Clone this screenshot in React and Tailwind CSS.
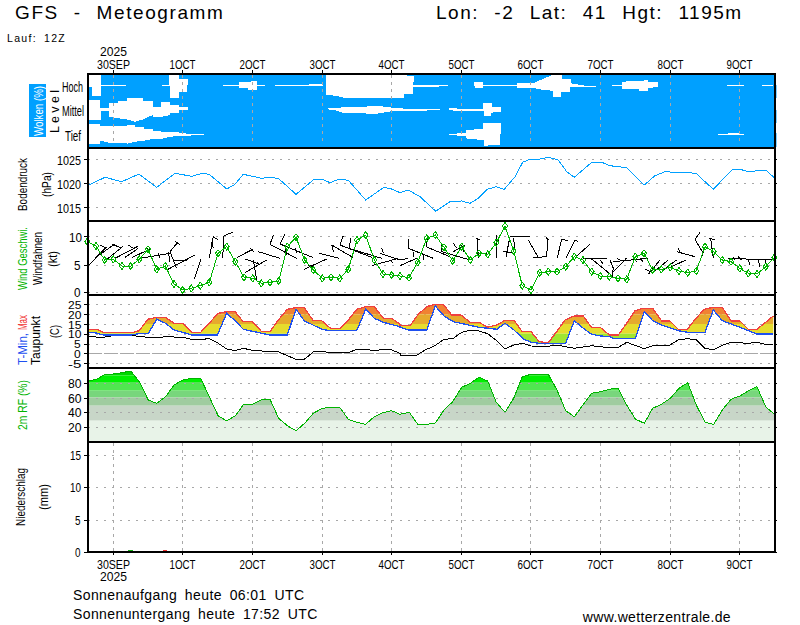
import React from "react";

const z = (ox, oy, a) => {
  const out = [];
  for (let i = 0; i < a.length; i += 2) out.push([ox + a[i] / 3, oy + a[i + 1] / 3]);
  return out;
};
const P = (pts) => pts.map((p) => p[0].toFixed(1) + "," + p[1].toFixed(1)).join(" ");
const DAYS = [
  ["30SEP", 113.5], ["1OCT", 182.5], ["2OCT", 252.5], ["3OCT", 322.5], ["4OCT", 391.5],
  ["5OCT", 461.5], ["6OCT", 530.5], ["7OCT", 600.5], ["8OCT", 670.5], ["9OCT", 739.5],
];
const L = 87.5, R = 775;
const FONT = "'Liberation Sans', Arial, sans-serif";

/* ---------- data, read from the reference ---------- */
const pressure = [
  ...z(0, 145, [260,123,315,97,365,110,417,87,470,127,525,85,575,94,607,85,628,88,680,132,705,118,730,88,785,100,805,97,835,100,888,148,940,105,965,102,990,113,1018,102,1045,106,1097,165,1150,128,1170,130,1200,143]),
  ...z(400, 145, [25,135,60,155,107,199,150,170,185,168,210,175,235,160,262,133,288,125,313,133,345,95,368,52,390,43,415,43,445,37,475,45,500,80,523,97,575,52,605,52,630,62,680,68,733,120,765,92,795,80,825,82,865,82,890,87,940,133,995,75,1020,73,1045,80,1097,75,1125,100]),
];
const gust = [
  ...z(0, 145, [262,290,288,303,314,345,340,343,366,363,392,363,418,343,444,313,470,373,496,363,522,417,548,435,574,430,601,422,628,412,654,325,680,305,706,350,732,397,758,400,784,415,810,412,836,408,862,305,888,277,914,345,940,375,967,400,993,397,1019,400,1045,373,1071,285,1097,270,1123,345,1149,387,1175,390]),
  ...z(400, 145, [0,393,27,398,53,352,80,280,106,270,132,307,158,348,185,305,211,345,237,325,263,328,289,293,315,243,341,318,367,422,393,435,419,383,445,380,471,380,497,365,523,335,549,345,575,380,601,393,628,395,654,400,680,403,706,335,732,325,758,375,784,373,811,367,837,378,863,383,889,378,915,305,941,320,967,345,993,350,1019,370,1045,385,1071,387,1097,365,1123,338]),
];
const barbsL = [
  [262,365,320,305],[290,335,345,297],[335,297,362,308],[300,300,315,308],[318,345,368,305],[345,340,415,303],[385,300,400,310],[375,337,415,310],
  [395,338,450,312],[420,340,510,325],[440,310,450,320],[475,325,480,340],[505,322,510,350],[500,375,585,330],[510,320,535,290],[510,320,530,370],[525,290,540,298],[520,345,560,345],
  [583,402,603,342],[628,338,640,275],[640,275,655,285],[633,290,640,310],[668,338,672,272],[672,272,698,262],[710,338,760,312],[750,310,762,320],
  [735,342,780,358],[735,383,800,345],[760,345,770,405],[770,350,780,360],[775,320,840,340],[810,298,820,270],[810,298,890,340],[840,297,855,268],[840,297,940,338],[855,310,860,330],[885,310,890,325],
  [912,373,980,342],[925,360,940,365],[957,325,1017,340],[995,300,1000,320],[995,300,1060,338],[1020,300,1030,272],[1020,300,1115,337],[1047,310,1053,278],[1047,310,1145,340],
  [1115,362,1195,340],[1140,325,1200,345],[1145,310,1150,325],[1170,345,1180,355],
];
const barbsR = [
  [0,362,50,340],[0,345,25,340],[25,283,25,310],[25,310,100,340],[40,320,40,335],[70,330,70,345],[78,305,150,335],[78,305,85,275],[125,295,125,320],[125,320,210,345],[160,295,170,310],[160,320,195,300],[185,300,190,320],
  [228,280,240,285],[232,280,235,338],[232,325,260,325],[290,270,290,338],[285,300,295,285],[318,335,330,275],[330,275,390,275],[310,320,345,325],[340,280,345,310],[385,285,415,338],[400,338,440,335],[437,275,445,285],[443,285,440,335],
  [472,338,485,283],[485,283,505,287],[498,338,525,285],[525,285,535,290],[528,335,570,298],[550,340,620,340],[575,342,640,395],[600,345,610,358],[630,345,640,370],[640,370,635,398],[640,380,680,340],[640,350,745,340],[650,340,660,345],[675,338,680,348],[700,335,710,350],[720,340,730,350],
  [735,372,760,385],[745,388,780,345],[765,378,805,345],[790,375,830,345],[808,368,858,345],[805,365,820,370],[830,320,885,335],[835,310,840,325],[885,283,900,263],[885,283,910,325],[905,335,915,305],[928,280,945,285],[932,280,940,340],
  [985,340,1115,345],[1000,337,1005,345],[1015,335,1025,345],[1045,345,1050,360],[1075,345,1080,365],[1095,345,1100,360],
];
const tmax = [
  ...z(0, 290, [262,120,292,118,310,127,400,127,418,122,443,88,465,83,497,83,522,100,548,100,575,127,602,127,627,100,655,70,680,65,705,65,730,95,757,95,785,125,810,125,835,90,862,58,888,53,913,53,940,92,965,92,993,116,1020,116,1045,90,1070,58,1097,50,1123,50,1150,85,1175,85,1200,103]),
  ...z(400, 290, [0,107,30,107,55,73,80,50,105,43,130,43,155,75,183,75,210,97,237,97,263,112,290,105,315,91,342,91,367,125,393,125,418,155,445,158,470,125,495,90,523,78,550,78,575,113,602,113,628,135,655,135,680,100,705,62,730,55,758,55,785,93,810,93,835,118,862,118,888,85,913,58,940,52,967,52,993,93,1020,93,1045,118,1071,118,1120,78]),
];
const tmin = [
  ...z(0, 290, [262,128,285,128,310,135,392,135,418,131,445,130,470,88,497,100,522,120,548,127,575,135,652,135,680,70,705,92,730,118,785,130,810,135,862,135,888,58,913,92,965,118,993,122,1070,122,1097,58,1123,85,1150,97,1200,110]),
  ...z(400, 290, [0,112,25,120,80,120,106,48,132,78,160,95,237,112,290,118,315,100,342,120,370,147,395,157,418,160,497,160,523,92,550,115,575,133,602,138,628,140,640,145,706,145,733,65,758,92,785,105,835,122,862,127,915,127,940,60,967,92,1020,112,1045,122,1071,132,1120,132]),
];
const dew = [
  ...z(0, 290, [262,140,310,142,340,137,392,134,418,140,470,143,497,140,548,142,575,148,602,150,627,145,655,160,680,177,705,182,730,175,757,181,785,183,835,185,862,197,888,208,913,208,940,186,965,184,993,188,1045,188,1070,178,1097,178,1123,182,1150,178,1175,180,1200,190]),
  ...z(400, 290, [0,196,50,196,75,180,105,167,130,149,160,145,185,127,210,121,237,123,263,131,290,152,315,176,342,165,367,160,393,168,445,169,470,165,523,175,575,167,628,173,655,172,680,157,733,176,758,167,810,165,835,150,862,146,888,149,915,175,940,179,970,165,993,157,1045,160,1071,157,1095,163,1120,163]),
];
const rh = [
  ...z(0, 290, [262,273,290,268,315,253,340,252,366,248,392,243,418,275,445,330,470,340,497,320,522,285,548,270,574,265,602,265,628,320,654,377,680,393,706,377,732,342,758,342,784,330,810,328,836,385,862,407,888,422,914,400,940,370,967,355,993,352,1019,352,1045,388,1071,397,1097,403,1123,380,1149,368,1175,362,1200,373]),
  ...z(400, 290, [28,367,53,403,80,403,106,399,132,360,158,335,185,292,211,280,237,262,263,273,289,337,315,367,341,325,367,260,393,253,445,253,471,300,497,362,523,380,575,310,601,305,628,298,654,294,680,345,706,387,733,400,758,355,784,343,811,325,837,295,863,278,889,345,915,397,941,403,967,360,993,328,1019,318,1045,303,1071,290,1097,350,1123,373]),
];
const clouds = [
  z(0, 0, [265,225,302,225,302,288,275,288,275,262,265,262]),
  z(0, 0, [302,254,350,254,378,256,378,258,340,258,302,257]),
  z(0, 0, [265,360,265,299,300,299,300,325,328,325,328,310,355,310,355,303,380,303,380,295,430,295,430,302,458,302,458,322,483,322,483,307,510,307,510,315,537,315,537,322,565,322,565,330,537,330,537,338,510,338,510,345,485,350,458,350,458,345,430,358,405,365,380,358,355,355,328,350,328,333,302,333,302,360]),
  z(0, 0, [265,372,300,372,300,378,380,378,380,375,405,375,405,382,433,382,433,387,458,387,458,393,483,393,483,395,510,395,510,397,537,397,537,400,612,402,612,405,560,407,510,410,483,417,458,417,433,422,405,425,380,432,380,428,328,428,300,422,300,432,265,432]),
  z(0, 0, [507,225,537,225,537,238,565,238,565,255,562,255,562,275,537,275,537,293,510,293,510,258,487,258,487,255,507,255]),
  z(0, 0, [670,255,718,255,718,245,745,245,772,243,772,255,795,255,795,258,772,258,772,270,745,270,745,265,718,265,718,258,670,258]),
  z(0, 0, [825,255,928,255,928,252,968,252,968,258,825,258]),
  z(0, 0, [978,225,1200,225,1200,293,1032,293,1005,287,978,285]),
  z(400, 0, [0,225,42,228,40,255,92,255,143,255,143,258,92,261,65,262,40,262,40,282,12,282,12,293,0,293]),
  [...z(0, 0, [978,326,1030,322,1085,322,1110,318,1140,318,1165,322,1200,325]), ...z(400, 0, [40,328,120,328,120,330,40,333,0,332]), ...z(0, 0, [1165,335,1140,340,1113,343,1085,338,1058,338,1032,340,1005,330,978,328])],
  z(400, 0, [145,323,195,328,250,328,250,310,275,310,275,322,303,322,303,335,273,338,273,348,252,348,252,332,195,332,170,333,147,330]),
  z(400, 0, [148,402,172,402,172,399,197,399,197,390,222,390,222,386,250,386,250,370,303,370,303,403,300,403,300,435,252,437,252,420,222,418,197,415,197,408,170,407,170,404,148,404]),
  z(400, 0, [222,246,250,246,250,255,352,255,352,248,405,248,432,235,458,225,485,225,485,238,512,238,512,250,560,258,665,256,665,245,718,243,745,240,745,245,773,245,773,260,745,265,745,272,718,272,718,267,667,267,667,258,560,260,510,262,510,275,483,275,483,290,458,290,458,272,432,270,405,265,352,265,352,258,250,258,250,263,225,263,222,255]),
  z(400, 0, [981,255,1032,255,1032,258,981,258]),
  z(400, 0, [1086,255,1120,255,1120,258,1086,258]),
  z(400, 0, [955,402,975,401,1010,399,1032,402,1032,404,955,404]),
];

/* ---------- svg primitives ---------- */
const T = ({ x, y, w, size = 11, fill = "#000", anchor = "start", children }) => (
  <text x={x} y={y} fontSize={size} fill={fill} fontFamily={FONT} textAnchor={anchor} textLength={w} lengthAdjust="spacingAndGlyphs">
    {children}
  </text>
);
/* vertical label: reads bottom to top, from y1 up to y2, baseline on x */
const V = ({ x, y1, y2, size = 13, fill = "#000", children }) => (
  <text transform={`translate(${x} ${y1}) rotate(-90)`} fontSize={size} fill={fill} fontFamily={FONT} textLength={y1 - y2} lengthAdjust="spacingAndGlyphs">
    {children}
  </text>
);
const HGrid = ({ ys, dash = "2 6" }) =>
  ys.map((y) => (
    <line key={y} x1={L} x2={R} y1={y} y2={y} stroke="#a8a8a8" strokeDasharray={dash} shapeRendering="crispEdges" />
  ));
const VGrid = ({ y1, y2 }) =>
  DAYS.map(([, x]) => (
    <line key={x} x1={x} x2={x} y1={y1} y2={y2} stroke="#a8a8a8" strokeDasharray="3 4" shapeRendering="crispEdges" />
  ));
const Ticks = ({ ys }) =>
  ys.map((y) => (
    <g key={y} stroke="#000" shapeRendering="crispEdges">
      <line x1={84} x2={87} y1={y} y2={y} />
      <line x1={775} x2={777} y1={y} y2={y} />
    </g>
  ));
const Frame = ({ y1, y2 }) => (
  <rect x={L} y={y1} width={R - L} height={y2 - y1} fill="none" stroke="#000" strokeWidth="2" shapeRendering="crispEdges" />
);
const Line = ({ pts, stroke, w = 1 }) => (
  <polyline points={P(pts)} fill="none" stroke={stroke} strokeWidth={w} strokeLinejoin="miter" shapeRendering="crispEdges" />
);
const Panel = ({ y, h, children }) => (
  <svg className="block w-[800px] shrink-0 overflow-visible" style={{ height: h }} viewBox={`0 ${y} 800 ${h}`}>
    {children}
  </svg>
);

const TEMP_BANDS = [
  [304, 314.3, "#f08232"], [314.3, 324, "#e6aa2d"], [324, 333.7, "#e6dc2d"], [333.7, 346, "#a0e632"],
];
const RH_BANDS = [
  [370, 375.5, "#00d800"], [375.5, 382, "#00f000"], [382, 390.7, "#50e650"], [390.7, 397.3, "#78d67c"],
  [397.3, 405.7, "#a0cca0"], [405.7, 420.7, "#c8d6c8"], [420.7, 442, "#e8f3e8"],
];

function DateLabels({ y, yearY }) {
  return (
    <>
      {DAYS.map(([d, x]) => (
        <T key={d} x={x} y={y} size={13} anchor="middle" w={d === "30SEP" ? 33 : 26}>{d}</T>
      ))}
      <T x={113.5} y={yearY} size={13} anchor="middle" w={27}>2025</T>
    </>
  );
}

export default function App() {
  const band = [...tmax, ...[...tmin].reverse()];
  return (
    <div className="relative flex h-[625px] w-[800px] flex-col overflow-hidden bg-white text-black" style={{ fontFamily: FONT }}>
      <header className="flex h-[32px] shrink-0 items-start pt-[1px] text-[19px] leading-[24px]">
        <h1 className="ml-[15px] w-[421px] whitespace-pre font-normal tracking-[1.6px] [word-spacing:8px]">GFS - Meteogramm</h1>
        <p className="whitespace-pre tracking-[1.5px] [word-spacing:8.6px]">Lon: -2 Lat: 41 Hgt: 1195m</p>
      </header>
      <p className="ml-[7px] h-[12px] shrink-0 text-[10.5px] leading-[12px] tracking-[1.3px] [word-spacing:3px]">Lauf: 12Z</p>

      {/* top axis */}
      <Panel y={44} h={29}>
        <DateLabels y={68.5} yearY={56} />
        {DAYS.map(([, x]) => <line key={x} x1={x} x2={x} y1={70} y2={73} stroke="#000" shapeRendering="crispEdges" />)}
      </Panel>

      {/* clouds */}
      <Panel y={73} h={75}>
        <rect x={L} y={74} width={R - L} height={74} fill="#00a0ff" />
        {[[85, 98], [110, 123], [133, 147]].map(([a, b]) => <rect key={a} x={775} y={a} width={1.5} height={b - a} fill="#00a0ff" />)}
        {clouds.map((c, i) => <polygon key={i} points={P(c)} fill="#fff" shapeRendering="crispEdges" />)}
        <VGrid y1={75} y2={143} />
        <Frame y1={74} y2={148} />
        <rect x={29} y={84} width={17} height={53} fill="#00a0ff" />
        <V x={42.5} y1={136} y2={86} fill="#fff">Wolken (%)</V>
        <V x={59} y1={133} y2={90}>L e v e l</V>
        <T x={62} y={91.5} size={14} w={21}>Hoch</T>
        <T x={62} y={115.5} size={14} w={22}>Mittel</T>
        <T x={65} y={140.5} size={14} w={16}>Tief</T>
      </Panel>

      {/* pressure */}
      <Panel y={148} h={73}>
        <HGrid ys={[159.5, 183.5, 207.5]} />
        <Ticks ys={[159.5, 183.5, 207.5]} />
        <Line pts={pressure} stroke="#00a0ff" />
        <Frame y1={148} y2={221} />
        <V x={27} y1={211} y2={158}>Bodendruck</V>
        <V x={51} y1={197} y2={172}>(hPa)</V>
        {[["1025", 164.5], ["1020", 188.5], ["1015", 212.5]].map(([t, y]) => <T key={t} x={57} y={y} size={13.5} w={24}>{t}</T>)}
      </Panel>

      {/* wind */}
      <Panel y={221} h={74}>
        <HGrid ys={[236.5, 265, 292]} />
        <Ticks ys={[236.5, 265, 292]} />
        {[...barbsL.map((b) => [0, b]), ...barbsR.map((b) => [400, b])].map(([ox, b], i) => (
          <line key={i} x1={ox + b[0] / 3} y1={145 + b[1] / 3} x2={ox + b[2] / 3} y2={145 + b[3] / 3} stroke="#000" shapeRendering="crispEdges" />
        ))}
        <Line pts={gust} stroke="#00b400" />
        {gust.map((p, i) => (
          <polygon key={i} points={P([[p[0], p[1] - 3.5], [p[0] + 2.5, p[1]], [p[0], p[1] + 3.5], [p[0] - 2.5, p[1]]])} fill="none" stroke="#00b400" shapeRendering="crispEdges" />
        ))}
        <Frame y1={221} y2={295} />
        <V x={26.5} y1={290} y2={227} fill="#00b400">Wind Geschwi.</V>
        <V x={41.5} y1={285} y2={232}>Windfahnen</V>
        <V x={57} y1={267} y2={251}>(kt)</V>
        {[["10", 241.5, 69], ["5", 270, 74], ["0", 296.5, 74]].map(([t, y, x]) => <T key={t} x={x} y={y} size={13.5} w={t.length * 6.5}>{t}</T>)}
      </Panel>

      {/* temperature */}
      <Panel y={295} h={73}>
        <clipPath id="tb"><polygon points={P(band)} /></clipPath>
        <HGrid ys={[304.5, 314.5, 324.5, 334, 344, 363.5]} />
        <line x1={L} x2={R} y1={353.5} y2={353.5} stroke="#a8a8a8" strokeDasharray="14 2" shapeRendering="crispEdges" />
        <g clipPath="url(#tb)">
          {TEMP_BANDS.map(([a, b, c]) => <rect key={a} x={L} y={a} width={R - L} height={b - a} fill={c} />)}
        </g>
        <Line pts={dew} stroke="#000" />
        <Line pts={tmin} stroke="#1e50f0" w={1.3} />
        <Line pts={tmax} stroke="#f04040" w={1.3} />
        <Ticks ys={[304.5, 314.5, 324.5, 334, 344, 353.5, 363.5]} />
        <Frame y1={295} y2={368} />
        <V x={26.5} y1={365} y2={333} fill="#1e50f0">T-Min,</V>
        <V x={26.5} y1={330} y2={315} fill="#f03030">Max</V>
        <V x={40} y1={365} y2={316}>Taupunkt</V>
        <V x={59} y1={338} y2={325}>(C)</V>
        {[["25", 308.5, 68], ["20", 318.5, 68], ["15", 328.5, 68], ["10", 338, 68], ["5", 348, 74], ["0", 357.5, 74], ["-5", 367.5, 68]].map(([t, y, x]) => (
          <T key={t} x={x} y={y} size={11.5} w={t.length * 6.7}>{t}</T>
        ))}
      </Panel>

      {/* humidity */}
      <Panel y={368} h={74}>
        <clipPath id="rb"><polygon points={P([[L, 442], ...rh, [R, 442]])} /></clipPath>
        <g clipPath="url(#rb)">
          {RH_BANDS.map(([a, b, c]) => <rect key={a} x={L} y={a} width={R - L} height={b - a} fill={c} />)}
        </g>
        <HGrid ys={[383.5, 398.5, 412.5, 427.5]} />
        <Ticks ys={[383.5, 398.5, 412.5, 427.5]} />
        <Line pts={rh} stroke="#00b400" />
        <Frame y1={368} y2={442} />
        <V x={27} y1={430} y2={380} fill="#00b400">2m RF (%)</V>
        {[["80", 388], ["60", 403], ["40", 417], ["20", 432]].map(([t, y]) => <T key={t} x={68} y={y} size={13.5} w={13.5}>{t}</T>)}
      </Panel>

      {/* precipitation */}
      <Panel y={442} h={143}>
        <HGrid ys={[455.5, 487.5, 520]} />
        <VGrid y1={443} y2={552} />
        <Ticks ys={[455.5, 487.5, 520, 552]} />
        <rect x={128} y={550} width={5} height={2} fill="#18b018" />
        <rect x={163} y={550} width={4} height={2} fill="#f03030" />
        <rect x={156} y={551} width={2} height={1} fill="#f03030" />
        <rect x={495} y={551} width={3} height={1} fill="#f06060" />
        <Frame y1={442} y2={552} />
        {DAYS.map(([, x]) => <line key={x} x1={x} x2={x} y1={552} y2={555} stroke="#000" shapeRendering="crispEdges" />)}
        <V x={25} y1={526} y2={468}>Niederschlag</V>
        <V x={48} y1={510} y2={484}>(mm)</V>
        {[["15", 460, 70], ["10", 492, 70], ["5", 524.5, 75], ["0", 556.5, 75]].map(([t, y, x]) => <T key={t} x={x} y={y} size={13} w={t.length * 5.5}>{t}</T>)}
        <DateLabels y={568.5} yearY={580.5} />
      </Panel>

      {/* footer */}
      <footer className="flex flex-1 items-start justify-between pl-[73px] pr-[69px] pt-[1px] text-[14px] leading-[18.5px]">
        <div className="tracking-[0.4px] [word-spacing:3.5px]">
          <p className="whitespace-pre">Sonnenaufgang heute 06:01 UTC</p>
          <p className="whitespace-pre">Sonnenuntergang heute 17:52 UTC</p>
        </div>
        <p className="mt-[24px] tracking-[0.35px] leading-[15px]">www.wetterzentrale.de</p>
      </footer>
    </div>
  );
}
